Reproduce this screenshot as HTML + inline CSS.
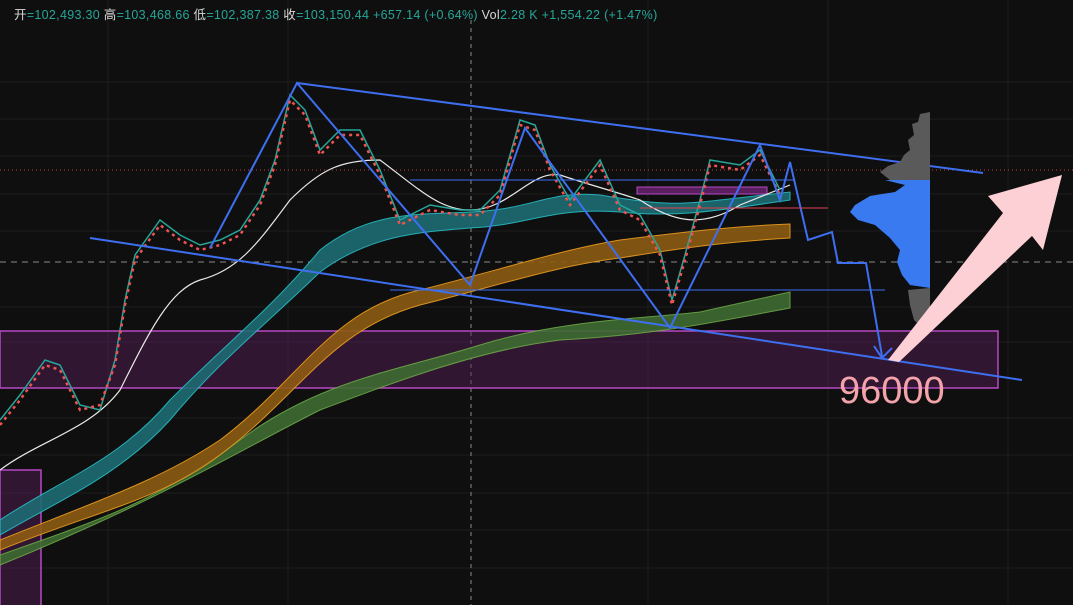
<!DOCTYPE html>
<html><head><meta charset="utf-8"><style>
html,body{margin:0;padding:0;background:#0f0f0f;width:1073px;height:605px;overflow:hidden}
svg{display:block}
</style></head><body>
<svg width="1073" height="605" viewBox="0 0 1073 605" xmlns="http://www.w3.org/2000/svg" font-family="Liberation Sans, Noto Sans CJK SC, sans-serif">
<rect width="1073" height="605" fill="#0f0f0f"/>
<g stroke="#1d1d1d" stroke-width="1">
<line x1="108" y1="0" x2="108" y2="605"/><line x1="288" y1="0" x2="288" y2="605"/><line x1="648" y1="0" x2="648" y2="605"/>
<line x1="828" y1="0" x2="828" y2="605"/><line x1="1008" y1="0" x2="1008" y2="605"/>
<line x1="0" y1="82" x2="1073" y2="82"/><line x1="0" y1="119" x2="1073" y2="119"/><line x1="0" y1="156" x2="1073" y2="156"/>
<line x1="0" y1="194" x2="1073" y2="194"/><line x1="0" y1="231" x2="1073" y2="231"/><line x1="0" y1="307" x2="1073" y2="307"/>
<line x1="0" y1="342" x2="1073" y2="342"/><line x1="0" y1="418" x2="1073" y2="418"/><line x1="0" y1="455" x2="1073" y2="455"/>
<line x1="0" y1="493" x2="1073" y2="493"/><line x1="0" y1="530" x2="1073" y2="530"/><line x1="0" y1="568" x2="1073" y2="568"/>
</g>
<line x1="471" y1="20" x2="471" y2="605" stroke="#888" stroke-dasharray="4,4"/>
<line x1="0" y1="262" x2="1073" y2="262" stroke="#888" stroke-dasharray="6,5"/>
<line x1="0" y1="170" x2="1073" y2="170" stroke="#c0404a" stroke-dasharray="1,3"/>
<rect x="0" y="331" width="998" height="57" fill="#5a1f5e" fill-opacity="0.45" stroke="#b648c4" stroke-width="1.5"/>
<rect x="0" y="470" width="41" height="140" fill="#5a1f5e" fill-opacity="0.45" stroke="#b648c4" stroke-width="1.5"/>
<rect x="637" y="187" width="130" height="7" fill="#5a1f5e" stroke="#b648c4"/>
<path d="M0,555 C100,520 160,500 240,440 C320,380 400,370 480,345 C560,320 650,318 700,312 L790,292 L790,308 C700,325 650,335 560,340 C480,350 400,380 320,410 C240,450 160,500 0,565Z" fill="#3f6b32" stroke="#6eaa48" stroke-width="1" opacity="0.9"/>
<path d="M0,540 C100,500 160,480 220,440 C300,380 330,310 420,290 C500,270 560,250 620,240 C700,230 740,226 790,224 L790,238 C740,241 700,245 620,258 C560,265 500,285 420,305 C330,330 300,395 220,455 C160,500 100,510 0,550Z" fill="#8c5b12" stroke="#f0a020" stroke-width="1" opacity="0.9"/>
<path d="M0,520 C60,480 120,460 170,400 C230,340 270,310 320,250 C370,210 420,215 470,212 C530,210 550,190 600,195 C660,205 680,205 720,200 L790,192 L790,200 C720,210 680,218 620,212 C550,207 530,225 470,228 C420,232 370,235 320,272 C260,330 220,360 170,420 C120,475 60,500 0,535Z" fill="#1e6b73" stroke="#28c0c8" stroke-width="1" opacity="0.9"/>
<path d="M0,470 C40,440 90,430 120,390 C150,330 170,290 200,280 C240,270 260,240 290,200 C320,170 340,160 380,160 C420,190 440,210 470,210 C510,210 530,170 560,175 C590,185 610,190 640,200 C670,220 700,230 740,205 L790,185" fill="none" stroke="#e8e8e8" stroke-width="1.2"/>
<g fill="none" stroke-width="1.5">
<path d="M0,420 L20,395 L45,360 L60,365 L80,405 L100,410 L115,360 L125,300 L135,255 L160,220 L180,235 L200,245 L220,240 L240,230 L260,200 L275,160 L290,95 L305,110 L320,150 L340,130 L360,130 L380,170 L400,220 L430,205 L460,210 L480,210 L500,190 L520,120 L535,125 L550,165 L570,200 L600,160 L620,205 L640,215 L660,250 L672,300 L685,255 L700,200 L710,160 L740,165 L760,150 L780,190" stroke="#26a69a"/>
<path d="M0,425 L20,400 L45,365 L60,370 L80,410 L100,405 L115,365 L125,305 L135,260 L160,225 L180,240 L200,250 L220,245 L240,235 L260,205 L275,165 L290,100 L305,115 L320,155 L340,135 L360,135 L380,175 L400,225 L430,210 L460,215 L480,215 L500,195 L520,125 L535,130 L550,170 L570,205 L600,165 L620,210 L640,220 L660,255 L672,305 L685,260 L700,205 L710,165 L740,170 L760,155 L780,195" stroke="#ef5350" stroke-dasharray="3,4" stroke-width="2.5"/>
</g>
<g stroke="#3e6ff0" stroke-width="2" fill="none">
<line x1="297" y1="83" x2="983" y2="173"/>
<line x1="90" y1="238" x2="1022" y2="380"/>
<path d="M210,248 L297,83 L470,285 L525,128 L670,328 L760,145 L780,200 L790,162 L808,240 L832,232 L838,263 L866,263 L882,356"/>
<path d="M874,346 L882,358 L892,348"/>
<line x1="390" y1="290" x2="885" y2="290" stroke-width="1"/>
<line x1="410" y1="180" x2="795" y2="180" stroke-width="1"/>
</g>
<line x1="640" y1="208" x2="828" y2="208" stroke="#e04050" stroke-width="1"/>
<path d="M930,180 L885,180 L905,185 L895,192 L870,196 L855,205 L850,212 L858,220 L875,225 L890,238 L900,250 L897,262 L902,275 L910,285 L930,288Z" fill="#3a7af0"/>
<path d="M930,112 L920,114 L918,122 L912,124 L914,135 L908,140 L910,150 L904,155 L900,162 L888,166 L880,172 L890,180 L930,180Z" fill="#5a5a5a"/>
<path d="M930,288 L908,290 L910,305 L914,320 L925,330 L930,330Z" fill="#5a5a5a"/>
<path d="M888,360 L1003,213 L988,196 L1062,175 L1043,250 L1032,236 L899,362Z" fill="#fcd0d4"/>
<text x="839" y="403" font-size="38" fill="#f4a3ab">96000</text>
<text x="14" y="19" font-size="12.5" letter-spacing="0.3" fill="#d8d8d8">开<tspan fill="#26a69a">=102,493.30</tspan> 高<tspan fill="#26a69a">=103,468.66</tspan> 低<tspan fill="#26a69a">=102,387.38</tspan> 收<tspan fill="#26a69a">=103,150.44 +657.14 (+0.64%)</tspan> Vol<tspan fill="#26a69a">2.28 K +1,554.22 (+1.47%)</tspan></text>
</svg>
</body></html>
